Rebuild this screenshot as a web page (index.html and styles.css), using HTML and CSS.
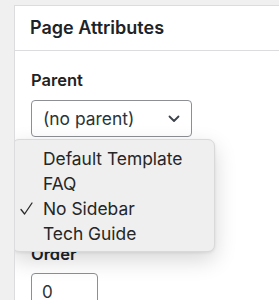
FILE: index.html
```html
<!DOCTYPE html>
<html lang="en">
<head>
    <meta charset="UTF-8">
    <meta name="viewport" content="width=device-width, initial-scale=1.0">
    <title>Page Attributes</title>
    <link rel="stylesheet" href="styles.css">
</head>
<body>
    <div class="postbox">
        <h2 class="postbox-title">Page Attributes</h2>
        <div class="inside">
            <p class="field-label">Parent</p>
            <div class="select-wrap">
                <div class="select">
                    <span>(no parent)</span>
                    <svg class="chevron" width="12" height="8" viewBox="0 0 12 8">
                        <path d="M1.5 1.5 L6 6 L10.5 1.5" fill="none" stroke="#3c434a" stroke-width="1.8" stroke-linecap="round" stroke-linejoin="round"/>
                    </svg>
                </div>

                <!-- open template popup -->
                <ul class="popup">
                    <li class="popup-item"><span class="mark"></span>Default Template</li>
                    <li class="popup-item"><span class="mark"></span>FAQ</li>
                    <li class="popup-item">
                        <span class="mark">
                            <svg width="13" height="13" viewBox="0 0 13 13">
                                <path d="M1 7.5 L4.6 12 L12 1" fill="none" stroke="#2a2a2a" stroke-width="1.3" stroke-linecap="round" stroke-linejoin="round"/>
                            </svg>
                        </span>No Sidebar
                    </li>
                    <li class="popup-item"><span class="mark"></span>Tech Guide</li>
                </ul>
            </div>

            <p class="field-label order-label">Order</p>
            <input class="order-input" type="text" value="0">
        </div>
    </div>
</body>
</html>
```

FILE: styles.css
```css
html, body {
    margin: 0;
    height: 100%;
    overflow: hidden;
}

body {
    box-sizing: border-box;
    background-color: #f0f0f1;
    padding: 5px 0 0 14px;
    font-family: Inter, "Noto Sans", sans-serif;
    color: #1d2327;
}

.postbox {
    height: 100%;
    background-color: #fff;
    border: 1px solid #dcdcde;
    border-right: none;
    border-bottom: none;
    overflow: hidden;
}

.postbox-title {
    margin: 0;
    padding: 12px 15px;
    font-size: 18px;
    line-height: 20px;
    font-weight: 600;
    border-bottom: 1px solid #dcdcde;
}

.inside {
    padding: 19px 16px 0;
}

.field-label {
    margin: 0;
    font-size: 16.5px;
    line-height: 20px;
    font-weight: 600;
}

.select-wrap {
    position: relative;
    margin-top: 10px;
    width: 161px;
}

.select {
    box-sizing: border-box;
    height: 37px;
    display: flex;
    align-items: center;
    justify-content: space-between;
    padding: 0 11px;
    border: 1px solid #8c8f94;
    border-radius: 4px;
    font-size: 17.4px;
    color: #2c3338;
}

.popup {
    position: absolute;
    left: -19px;
    top: 39px;
    box-sizing: border-box;
    width: 203px;
    height: 113px;
    margin: 0;
    padding: 6px 0 0;
    list-style: none;
    background-color: #efefef;
    border: 1px solid #d9d9d9;
    border-radius: 7px;
    box-shadow: 0 8px 22px rgba(0, 0, 0, 0.16), 0 1px 3px rgba(0, 0, 0, 0.08);
}

.popup-item {
    display: flex;
    align-items: center;
    height: 25px;
    font-size: 17.4px;
    color: #262626;
}

.mark {
    width: 30px;
    display: flex;
    justify-content: flex-end;
}

.mark svg {
    margin-right: 10px;
}

.order-label {
    margin-top: 107px;
}

.order-input {
    box-sizing: border-box;
    display: block;
    margin-top: 9px;
    width: 67px;
    height: 37px;
    padding: 0 10px;
    border: 1px solid #8c8f94;
    border-radius: 4px;
    font-family: Inter, sans-serif;
    font-size: 17px;
    color: #2c3338;
}
```
